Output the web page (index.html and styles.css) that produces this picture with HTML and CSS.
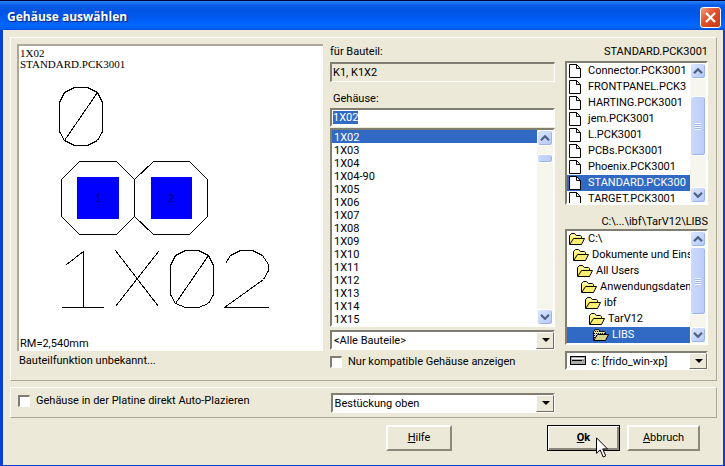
FILE: index.html
```html
<!DOCTYPE html>
<html lang="de">
<head>
<meta charset="utf-8">
<title>Gehäuse auswählen</title>
<link rel="stylesheet" href="styles.css">
</head>
<body>
<svg class="defs" aria-hidden="true">
  <symbol id="file" viewBox="0 0 12 14"><path d="M.5.5h7l4 4v9H.5z" fill="#fff" stroke="#000"/><path d="M7.5.5v4h4" fill="none" stroke="#000"/></symbol>
  <symbol id="folder" viewBox="0 0 16 12"><path d="M.5 11.500V2.500l2-2h3l2 2h4l1 1v2h3l-3 6z" fill="#ffee70" stroke="#000"/><path d="M1 11l3.500-5.500h8" fill="none" stroke="#000"/><path d="M2 2.500h4M2 3.500h9" stroke="#fff9b0"/></symbol>
  <symbol id="folder-open" viewBox="0 0 16 12"><path d="M.5 11.500V2.500l2-2h3l2 2h4l1 1v2h3l-3 6z" fill="#d8d48a" stroke="#000"/><path d="M2 2.500h10M1 4.500h11M1 6.500h3M1 8.500h2" stroke="#000" stroke-dasharray="1 1"/><path d="M2 3.500h10M1 5.500h3M1 7.500h2" stroke="#fff" stroke-dasharray="1 1"/><path d="M1 11l3.500-5.500h8" fill="none" stroke="#000"/></symbol>
  <symbol id="up" viewBox="0 0 10 6"><path d="M1 5.200l4-4 4 4" fill="none" stroke="#4d6185" stroke-width="2.200"/></symbol>
  <symbol id="down" viewBox="0 0 10 6"><path d="M1 .8l4 4 4-4" fill="none" stroke="#4d6185" stroke-width="2.200"/></symbol>
</svg>
<div class="window">
  <header class="titlebar">
    <h1>Gehäuse auswählen</h1>
    <button class="close" aria-label="Schließen"><svg viewBox="0 0 19 19"><path d="M5 5l9 9M14 5l-9 9" stroke="#fff" stroke-width="2.200"/></svg></button>
  </header>
  <main class="content">
    <section class="group columns">
      <div class="preview">
        <div class="canvas">
          <p class="serif">1X02<br>STANDARD.PCK3001</p>
          <svg class="drawing" viewBox="20 70 302 267" preserveAspectRatio="xMinYMin" fill="none" stroke="#000" shape-rendering="crispEdges" role="img" aria-label="Gehäuse 1X02">
            <path d="M74.500 87.500h13l10 5 5 10v29l-5 9-10 5h-13l-10-5-5-9v-29l5-10zM97.500 92.500l-33 48"/>
            <path d="M79.500 161.500h37l18 18v37l-18 18h-37l-18-18v-37zM153.500 161.500h36l18 18v37l-18 18h-36l-19-18v-37z"/>
            <path d="M77 177h42v42H77zM151 177h41v42h-41z" fill="#00f" stroke="none"/>
            <text class="pin" x="95" y="202">1</text>
            <text class="pin" x="168" y="202">2</text>
            <path d="M66.500 264.500l17-13v56M61.500 307.500h42M115.500 250.500l43 56M158.500 251.500l-43 55"/>
            <path d="M185.500 250.500h13l10 5 5 10v29l-5 9-10 4h-13l-10-4-5-9v-29l5-10zM208.500 255.500l-33 48"/>
            <path d="M225.500 263.500l5-8 10-5h12l10 5 6 9v6l-5 9-39 28h44"/>
          </svg>
          <p class="pitch">RM=2,540mm</p>
        </div>
        <p class="function">Bauteilfunktion unbekannt...</p>
      </div>
      <div class="middle">
        <label for="part">für Bauteil:</label>
        <input id="part" class="sunken readonly" value="K1, K1X2" readonly>
        <label for="housing" class="indent">Gehäuse:</label>
        <input id="housing" class="sunken edit" value="1X02" autofocus>
        <div class="sunken listbox">
          <select size="15" aria-label="Gehäuseliste">
            <option selected>1X02</option><option>1X03</option><option>1X04</option><option>1X04-90</option><option>1X05</option><option>1X06</option><option>1X07</option><option>1X08</option><option>1X09</option><option>1X10</option><option>1X11</option><option>1X12</option><option>1X13</option><option>1X14</option><option>1X15</option>
          </select>
          <div class="scroll"><button aria-label="Nach oben"><svg><use href="#up"/></svg></button><div class="track top"><i class="thumb small"></i></div><button aria-label="Nach unten"><svg><use href="#down"/></svg></button></div>
        </div>
        <div class="combo"><select aria-label="Bauteile"><option>&lt;Alle Bauteile&gt;</option></select></div>
        <label class="check"><input type="checkbox">Nur kompatible Gehäuse anzeigen</label>
      </div>
      <div class="right">
        <p class="path">STANDARD.PCK3001</p>
        <div class="sunken listbox files">
          <ul role="listbox" aria-label="Bibliotheken">
            <li role="option"><svg><use href="#file"/></svg>Connector.PCK3001</li>
            <li role="option"><svg><use href="#file"/></svg>FRONTPANEL.PCK3</li>
            <li role="option"><svg><use href="#file"/></svg>HARTING.PCK3001</li>
            <li role="option"><svg><use href="#file"/></svg>jem.PCK3001</li>
            <li role="option"><svg><use href="#file"/></svg>L.PCK3001</li>
            <li role="option"><svg><use href="#file"/></svg>PCBs.PCK3001</li>
            <li role="option"><svg><use href="#file"/></svg>Phoenix.PCK3001</li>
            <li role="option" class="selected" aria-selected="true"><svg><use href="#file"/></svg>STANDARD.PCK300</li>
            <li role="option"><svg><use href="#file"/></svg>TARGET.PCK3001</li>
          </ul>
          <div class="scroll"><button aria-label="Nach oben"><svg><use href="#up"/></svg></button><div class="track mid"><i class="thumb medium"></i></div><button aria-label="Nach unten"><svg><use href="#down"/></svg></button></div>
        </div>
        <p class="path">C:\...\ibf\TarV12\LIBS</p>
        <div class="sunken listbox tree">
          <ul role="listbox" aria-label="Ordner">
            <li role="option"><svg><use href="#folder"/></svg>C:\</li>
            <li role="option"><svg><use href="#folder"/></svg>Dokumente und Eins</li>
            <li role="option"><svg><use href="#folder"/></svg>All Users</li>
            <li role="option"><svg><use href="#folder"/></svg>Anwendungsdaten</li>
            <li role="option"><svg><use href="#folder"/></svg>ibf</li>
            <li role="option"><svg><use href="#folder"/></svg>TarV12</li>
            <li role="option" class="selected" aria-selected="true"><svg><use href="#folder-open"/></svg>LIBS</li>
          </ul>
          <div class="scroll"><button aria-label="Nach oben"><svg><use href="#up"/></svg></button><div class="track"><i class="thumb large"></i></div><button aria-label="Nach unten"><svg><use href="#down"/></svg></button></div>
        </div>
        <div class="combo drive">
          <select aria-label="Laufwerk"><option>c: [frido_win-xp]</option></select>
          <svg class="disk" viewBox="0 0 16 9"><rect x=".5" y=".5" width="15" height="8" fill="#aaa" stroke="#000"/><path d="M2 2.500h12" stroke="#fff"/><path d="M2 4.500h10" stroke="#000"/><path d="M13 4.500h1" stroke="#0b0"/></svg>
        </div>
      </div>
    </section>
    <section class="group columns placement">
      <label class="check"><input type="checkbox">Gehäuse in der Platine direkt Auto-Plazieren</label>
      <div class="combo"><select aria-label="Bestückungsseite"><option>Bestückung oben</option></select></div>
    </section>
    <footer class="actions">
      <button class="button help"><u>H</u>ilfe</button>
      <div class="ok-wrap">
        <button class="button ok"><u>O</u>k</button>
        <svg class="cursor" viewBox="0 0 12 21"><path d="M.5.8v15.500l3.700-3.500 3 7.200 2.500-1.100-3-7h4.800z" fill="#fff" stroke="#000"/></svg>
      </div>
      <button class="button"><u>A</u>bbruch</button>
    </footer>
  </main>
</div>
<script>document.getElementById("housing").select();</script>
</body>
</html>
```

FILE: styles.css
```css
* { box-sizing: border-box; }
body, p, h1, ul { margin: 0; padding: 0; }
body, input, select, button {
  font: 11px/16px Roboto, "Liberation Sans", sans-serif;
  color: #000;
}
button, input, select { margin: 0; padding: 0; border-radius: 0; outline: none; }
.defs { position: absolute; width: 0; height: 0; }

.window {
  display: flex;
  flex-direction: column;
  min-height: 100vh;
  background: #ece9d8;
  border: solid #0842d0;
  border-width: 0 2px 1px 3px;
}
.titlebar {
  display: flex;
  align-items: center;
  justify-content: space-between;
  height: 30px;
  margin: 0 -2px 0 -3px;
  padding: 3px 4px 0 7px;
  border-top: 1px solid #00003c;
  background: linear-gradient(#2a84f8 0, #0c5de8 4px, #0054e3 10px, #005cf4 18px, #0068ff 24px, #0062f4 27px, #0040c8 30px);
}
.titlebar h1 {
  font: bold 12px/20px "Open Sans", sans-serif;
  color: #fff;
  text-shadow: 1px 1px 1px #00217a;
}
.close {
  width: 21px;
  height: 21px;
  border: 1px solid #fff;
  border-radius: 3px;
  background: linear-gradient(135deg, #f0a084, #e0502c 45%, #c83810);
}
.close svg { display: block; width: 19px; height: 19px; }

.content { padding: 7px 6px 0 7px; }
.group {
  border: 1px solid #fff;
  border-right-color: #aca899;
  border-bottom-color: #aca899;
  padding: 6px 8px 0 6px;
}
.columns {
  display: grid;
  grid-template-columns: minmax(0, 306fr) minmax(0, 225fr) minmax(0, 146fr);
  column-gap: 7px;
}

.canvas {
  display: flex;
  flex-direction: column;
  height: 307px;
  border: solid #aca899;
  border-width: 2px 0 0 2px;
  background: #fff;
  padding: 2px 1px 0;
}
.serif { font: 11px/11px "Liberation Serif", "Times New Roman", serif; }
.drawing { display: block; width: 302px; height: 267px; }
.pin { font: 11px "Liberation Sans", sans-serif; fill: #000070; stroke: none; }
.pitch { line-height: 14px; }
.function { padding: 2px 2px 11px; }

.middle, .right { display: flex; flex-direction: column; }
.right { padding-left: 3px; }
.middle > label { height: 18px; }
.sunken {
  border: 2px solid #fff;
  border-top-color: #807d72;
  border-left-color: #807d72;
  background: #fff;
}
.readonly { width: 100%; height: 20px; background: #ece9d8; padding: 0 1px; border-width: 2px 1px 1px 2px; }
.middle > .indent { height: 26px; padding: 9px 3px 0; }
.edit { width: 100%; height: 19px; padding: 0 1px; margin-bottom: 1px; }
.edit::selection { background: #316ac5; color: #fff; }

.listbox { display: flex; overflow: hidden; }
.listbox select {
  flex: 1;
  min-width: 0;
  height: 195px;
  border: 0;
  overflow: hidden;
  scrollbar-width: none;
}
.listbox option { height: 13px; min-height: 13px; line-height: 13px; padding: 1px 2px 0; color: #000; }
.listbox option:checked { background: #316ac5 linear-gradient(#316ac5, #316ac5); color: #fff; }
.listbox ul { flex: 1; min-width: 0; list-style: none; overflow: hidden; }
.listbox li { display: flex; align-items: center; gap: 7px; height: 16px; padding-left: 2px; white-space: nowrap; overflow: hidden; }
.listbox li svg { flex: none; width: 12px; height: 14px; }
.listbox .selected { background: #316ac5; color: #fff; }
.files { height: 144px; }
.tree { height: 116px; }
.listbox.tree li { gap: 3px; }
.listbox.tree li svg { width: 16px; height: 12px; }
.tree li:nth-child(2) { padding-left: 6px; }
.tree li:nth-child(3) { padding-left: 10px; }
.tree li:nth-child(4) { padding-left: 14px; }
.tree li:nth-child(5) { padding-left: 18px; }
.tree li:nth-child(6) { padding-left: 22px; }
.tree li:nth-child(7) { padding-left: 26px; }

.scroll { flex: none; display: flex; flex-direction: column; width: 16px; background: #f6f5ee; }
.scroll button {
  display: grid;
  place-items: center;
  height: 16px;
  border: 1px solid #fff;
  border-radius: 3px;
  background: linear-gradient(135deg, #dbe6fe, #b4c8f6);
  box-shadow: inset -1px -1px #9db5ea;
}
.scroll svg { width: 10px; height: 6px; }
.track { flex: 1; display: flex; }
.track.top { padding-top: 8px; }
.track.mid { padding-top: 17px; }
.thumb {
  display: grid;
  width: 16px;
  border: 1px solid #fff;
  border-radius: 3px;
  background: linear-gradient(90deg, #cbdafc, #bacbf8);
  box-shadow: inset -1px -1px #9db5ea;
}
.small { height: 9px; }
.medium { height: 60px; }
.large { height: 68px; }
.medium::after, .large::after {
  content: "";
  place-self: center;
  width: 6px;
  height: 7px;
  background: repeating-linear-gradient(#f4f8ff 0 1px, #9fb6ee 1px 2px);
}

.combo { position: relative; height: 20px; }
.combo select {
  display: block;
  appearance: none;
  width: 100%;
  height: 100%;
  border: 2px solid #fff;
  border-top-color: #807d72;
  border-left-color: #807d72;
  background: #fff;
  padding: 1px 18px 0 2px;
}
.combo::before {
  content: "";
  position: absolute;
  inset: 2px 1px 1px auto;
  width: 16px;
  background: #ece9d8;
  border: 1px solid #fff;
  border-right-color: #716f64;
  border-bottom-color: #716f64;
  pointer-events: none;
}
.combo::after {
  content: "";
  position: absolute;
  right: 5px;
  top: 8px;
  border: 4px solid transparent;
  border-top-color: #000;
  border-bottom: 0;
  pointer-events: none;
}
.middle .combo { margin-top: 3px; }
.combo.drive { height: 19px; margin-top: 6px; }
.combo.drive select { padding-left: 24px; }
.disk { position: absolute; left: 5px; top: 5px; width: 16px; height: 9px; pointer-events: none; }

.check { display: flex; align-items: center; gap: 6px; }
.middle > .check { height: 14px; margin-top: 5px; }
.check input {
  appearance: none;
  width: 12px;
  height: 12px;
  border: 1px solid #fff;
  border-top: 2px solid #807d72;
  border-left: 2px solid #807d72;
  background: #fff;
}
.path { height: 17px; text-align: right; }
.files + .path { height: 24px; padding-top: 9px; }

.placement { margin-top: 6px; padding: 5px 8px 4px 7px; }
.placement .check { height: 16px; }
.actions { display: flex; justify-content: flex-end; gap: 7px; padding: 7px 17px 12px 0; }
.button {
  width: 73px;
  height: 26px;
  background: #ece9d8;
  border: 2px solid #fff;
  border-right-color: #8c897a;
  border-bottom-color: #8c897a;
}
.help { width: 66px; margin-right: 88px; }
.ok { display: block; font-weight: bold; border: 1px solid #000; box-shadow: inset 1px 1px #fff, inset -2px -2px #8c897a; }
.ok-wrap { position: relative; }
.cursor { position: absolute; left: 49px; top: 12px; width: 12px; height: 21px; }
```
